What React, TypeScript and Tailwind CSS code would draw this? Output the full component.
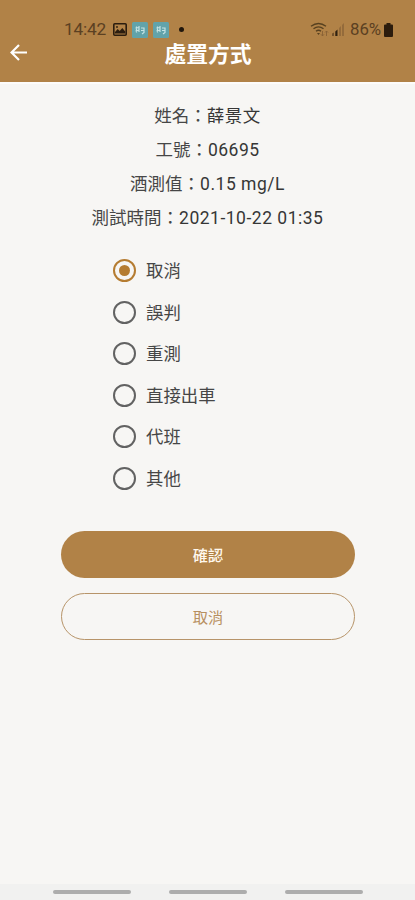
import { useState } from 'react';

const details = [
  ['姓名', '薛景文'],
  ['工號', '06695'],
  ['酒測值', '0.15 mg/L'],
  ['測試時間', '2021-10-22 01:35'],
];
const options = ['取消', '誤判', '重測', '直接出車', '代班', '其他'];

function StatusBar() {
  return (
    <div className="flex h-[19px] items-center pl-[64px] pr-[22px] text-[17.3px] leading-[19px] text-[#5b4022]">
      <span className="w-[42px] whitespace-nowrap tracking-[-0.2px]">14:42</span>
      <svg className="ml-[7px] h-[13px] w-[14px]" viewBox="0 0 14 13" fill="none">
        <rect x="0.8" y="0.8" width="12.4" height="11.4" rx="1" stroke="#2b1d0f" strokeWidth="1.6" />
        <path d="M2 10.5V9l2.7-3 2 2 2.6-3 2.9 3.6v1.9z" fill="#2b1d0f" />
        <circle cx="4" cy="4" r="0.9" fill="#2b1d0f" />
      </svg>
      <NoticeIcon />
      <NoticeIcon />
      <span className="ml-[10px] size-[5px] rounded-full bg-[#20160c]" />
      <svg className="ml-auto h-[16px] w-[36px]" viewBox="0 0 36 16" fill="none">
        <g stroke="#57401f" strokeWidth="1.4">
          <path d="M1 4.2Q8.5-1.2 16 4.2" />
          <path d="M3.5 6.8Q8.5 3 13.5 6.8" />
          <path d="M6 9.2Q8.5 7.3 11 9.2" />
        </g>
        <path d="M7 11h3l-1.5 2z" fill="#57401f" />
        <path d="M12.5 14V9M11 12.3l1.5 1.7 1.5-1.7M16.5 9v5M15 10.5L16.5 9l1.5 1.5" stroke="#886135" strokeWidth="0.9" />
        <path d="M22 14v-2.5l2-1V14z" fill="#73512b" />
        <path d="M25.3 14V9.5l2.2-2V14z" fill="#2e2010" />
        <path d="M29 14V6l2-2v10zM32 14V3l2-2v13z" fill="#946b3b" />
      </svg>
      <span className="ml-[4px] w-[32px] whitespace-nowrap text-[16.8px]">86%</span>
      <svg className="ml-[2px] h-[14px] w-[9px]" viewBox="0 0 9 14">
        <path d="M2.5 0h4v1.5H8q1 0 1 1V13q0 1-1 1H1q-1 0-1-1V2.5q0-1 1-1h1.5z" fill="#2c1c0d" />
      </svg>
    </div>
  );
}

function NoticeIcon() {
  return (
    <svg className="ml-[5px] size-[16px]" viewBox="0 0 16 16">
      <rect width="16" height="16" rx="1.5" fill="#62a3aa" />
      <path d="M4.5 4.5v6M7 4v6M3.5 6l4-.5M3.500 9l4-1M9 6h3v4.500l-2 1.500M9 8.500h3" fill="none" stroke="#c5e3e4" strokeWidth="1.2" />
    </svg>
  );
}

export default function App() {
  const [selected, setSelected] = useState(0);
  return (
    <main className="flex h-[900px] w-full flex-col overflow-hidden bg-[#f7f6f4] font-['Roboto','Noto_Sans_CJK_TC',sans-serif] text-[#464646]">
      <header className="h-[82px] shrink-0 bg-[#b18247] pt-[20px]">
        <StatusBar />
        <div className="grid h-[30px] grid-cols-[36px_1fr_36px] items-start">
          <button aria-label="返回" className="pl-[10px] pt-[5px]">
            <svg className="h-[17px] w-[17px]" viewBox="0 0 17 17" fill="none" stroke="white" strokeWidth="2.2">
              <path d="M17 8.5H2M9 1L1.5 8.5 9 16" />
            </svg>
          </button>
          <h1 className="pl-px pt-px text-center text-[21.8px] font-bold leading-[30px] text-white">處置方式</h1>
        </div>
      </header>
      <div className="h-[2px] shrink-0 bg-[#fdfcfb]" />
      <section className="mt-[14.5px] shrink-0 text-center text-[17.5px] leading-[34.3px]">
        {details.map(([label, value]) => (
          <p key={label}>{label}：<span className="tracking-[0.5px] text-[#363636]">{value}</span></p>
        ))}
      </section>
      <section role="radiogroup" className="ml-[113px] mt-[14px] flex shrink-0 flex-col">
        {options.map((option, index) => (
          <button key={option} role="radio" aria-checked={selected === index} onClick={() => setSelected(index)} className="flex h-[41.6px] items-center text-left text-[17.4px]">
            <span className={selected === index ? 'flex size-[23px] items-center justify-center rounded-full border-2 border-[#b57c31]' : 'size-[23px] rounded-full border-2 border-[#626262]'}>
              {selected === index && <span className="size-[11px] rounded-full bg-[#b57c31]" />}
            </span>
            <span className="ml-[10px] pt-[1px]">{option}</span>
          </button>
        ))}
      </section>
      <div className="mx-auto mt-[31.5px] flex w-[294px] shrink-0 flex-col gap-[15px] text-[15.2px]">
        <button className="h-[47px] rounded-full bg-[#b18247] pl-px pt-[5px] font-medium text-[#fff8ed]">確認</button>
        <button className="h-[47px] rounded-full border border-[#b79469] pl-px pt-[5px] text-[#b78f5f]">取消</button>
      </div>
      <nav className="mt-auto flex h-[16px] shrink-0 items-center justify-center gap-[38px] bg-[#f1f1f0]">
        <span className="h-[4px] w-[78px] rounded-full bg-[#adadad]" />
        <span className="h-[4px] w-[78px] rounded-full bg-[#adadad]" />
        <span className="h-[4px] w-[78px] rounded-full bg-[#adadad]" />
      </nav>
    </main>
  );
}
